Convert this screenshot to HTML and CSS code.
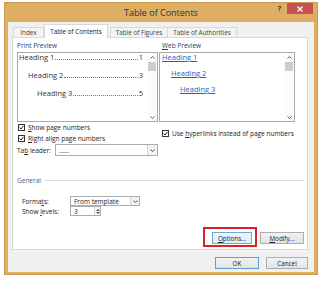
FILE: index.html
```html
<!DOCTYPE html>
<html lang="en">
<head>
    <meta charset="UTF-8">
    <meta name="viewport" content="width=device-width, initial-scale=1.0">
    <title>Table of Contents</title>
    <link rel="stylesheet" href="styles.css">
</head>
<body>
    <div class="screen">
        <div class="dialog">
            <div class="titlebar">
                <span></span>
                <span class="title">Table of Contents</span>
                <div class="title-controls">
                    <span class="help">?</span>
                    <span class="close">
                        <svg width="6" height="6" viewBox="0 0 6 6"><path d="M0.5 0.5 L5.5 5.5 M5.5 0.5 L0.5 5.5" stroke="#fff" stroke-width="1.3"/></svg>
                    </span>
                </div>
            </div>

            <div class="dialog-body">
                <div class="tabs">
                    <span class="tab tab-index">Index</span>
                    <span class="tab tab-toc active">Table of Contents</span>
                    <span class="tab tab-figures">Table of Figures</span>
                    <span class="tab tab-authorities">Table of Authorities</span>
                </div>

                <div class="panel">
                    <div class="previews">
                        <div class="col print-col">
                            <div class="group-label">Print Preview</div>
                            <div class="preview-box">
                                <div class="preview-list">
                                    <div class="toc-line">
                                        <span>Heading 1 </span><span class="dots"></span><span>1</span>
                                    </div>
                                    <div class="toc-line lvl2">
                                        <span>Heading 2 </span><span class="dots"></span><span>3</span>
                                    </div>
                                    <div class="toc-line lvl3">
                                        <span>Heading 3</span><span class="dots"></span><span>5</span>
                                    </div>
                                </div>
                                <div class="scroll">
                                    <span class="arrow"><svg width="5" height="3" viewBox="0 0 5 3"><path d="M0.5 2.5 L2.5 0.5 L4.5 2.5" fill="none" stroke="#555"/></svg></span>
                                    <span class="thumb"></span>
                                    <span class="scroll-fill"></span>
                                    <span class="arrow"><svg width="5" height="3" viewBox="0 0 5 3"><path d="M0.5 0.5 L2.5 2.5 L4.5 0.5" fill="none" stroke="#555"/></svg></span>
                                </div>
                            </div>
                            <div class="check">
                                <span class="box"><svg width="5" height="5" viewBox="0 0 5 5"><path d="M0.5 2.5 L2 4 L4.5 0.8" fill="none" stroke="#222" stroke-width="1"/></svg></span>
                                <span><u>S</u>how page numbers</span>
                            </div>
                            <div class="check">
                                <span class="box"><svg width="5" height="5" viewBox="0 0 5 5"><path d="M0.5 2.5 L2 4 L4.5 0.8" fill="none" stroke="#222" stroke-width="1"/></svg></span>
                                <span><u>R</u>ight align page numbers</span>
                            </div>
                            <div class="field leader">
                                <span class="field-label">Ta<u>b</u> leader:</span>
                                <div class="select select-leader">
                                    <span class="select-value">......</span>
                                    <span class="select-arrow"><svg width="5" height="3" viewBox="0 0 5 3"><path d="M0.5 0.5 L2.5 2.5 L4.5 0.5" fill="none" stroke="#444"/></svg></span>
                                </div>
                            </div>
                        </div>

                        <div class="sep"></div>

                        <div class="col web-col">
                            <div class="group-label"><u>W</u>eb Preview</div>
                            <div class="preview-box">
                                <div class="preview-list links">
                                    <a class="link">Heading 1</a>
                                    <a class="link lvl2">Heading 2</a>
                                    <a class="link lvl3">Heading 3</a>
                                </div>
                                <div class="scroll">
                                    <span class="arrow"><svg width="5" height="3" viewBox="0 0 5 3"><path d="M0.5 2.5 L2.5 0.5 L4.5 2.5" fill="none" stroke="#555"/></svg></span>
                                    <span class="thumb"></span>
                                    <span class="scroll-fill"></span>
                                    <span class="arrow"><svg width="5" height="3" viewBox="0 0 5 3"><path d="M0.5 0.5 L2.5 2.5 L4.5 0.5" fill="none" stroke="#555"/></svg></span>
                                </div>
                            </div>
                            <div class="check">
                                <span class="box"><svg width="5" height="5" viewBox="0 0 5 5"><path d="M0.5 2.5 L2 4 L4.5 0.8" fill="none" stroke="#222" stroke-width="1"/></svg></span>
                                <span>Use <u>h</u>yperlinks instead of page numbers</span>
                            </div>
                        </div>
                    </div>

                    <div class="general">
                        <div class="general-head">
                            <span class="general-label">General</span>
                            <span class="general-line"></span>
                        </div>
                        <div class="field">
                            <span class="form-label">Forma<u>t</u>s:</span>
                            <div class="select select-formats">
                                <span class="select-value">From template</span>
                                <span class="select-arrow"><svg width="5" height="3" viewBox="0 0 5 3"><path d="M0.5 0.5 L2.5 2.5 L4.5 0.5" fill="none" stroke="#444"/></svg></span>
                            </div>
                        </div>
                        <div class="field">
                            <span class="form-label">Show <u>l</u>evels:</span>
                            <div class="select select-levels">
                                <span class="select-value">3</span>
                                <span class="spin">
                                    <svg width="4" height="7" viewBox="0 0 4 7"><path d="M0 3 L2 1 L4 3 Z M0 4 L2 6 L4 4 Z" fill="#555"/></svg>
                                </span>
                            </div>
                        </div>
                    </div>

                    <div class="panel-buttons">
                        <span class="highlight">
                            <span class="btn btn-options"><u>O</u>ptions...</span>
                        </span>
                        <span class="btn btn-modify"><u>M</u>odify...</span>
                    </div>
                </div>

                <div class="footer">
                    <span class="btn btn-ok">OK</span>
                    <span class="btn btn-cancel">Cancel</span>
                </div>
            </div>
        </div>
    </div>
</body>
</html>
```

FILE: styles.css
```css
body {
    margin: 0;
    background-color: #fff;
    font-family: "Open Sans", "Noto Sans", sans-serif;
    font-size: 6.5px;
    color: #222;
}
.screen {
    width: 320px;
    height: 284px;
    padding: 2px 0 0 4px;
    box-sizing: border-box;
    overflow: hidden;
}
.dialog {
    width: 314px;
    height: 273px;
    box-sizing: border-box;
    background-color: #ddae63;
    border: 1px solid #c99a4c;
    padding: 0 3px 2px;
    display: flex;
    flex-direction: column;
}
.titlebar {
    height: 19px;
    display: grid;
    grid-template-columns: 1fr auto 1fr;
    align-items: center;
}
.title {
    font-size: 9px;
    color: #333;
}
.title-controls {
    display: flex;
    justify-content: flex-end;
    align-self: start;
    align-items: center;
}
.help {
    font-size: 7px;
    font-weight: bold;
    color: #333;
    margin-right: 6px;
}
.close {
    width: 26px;
    height: 11px;
    margin-right: 1px;
    background-color: #c75050;
    display: flex;
    align-items: center;
    justify-content: center;
}
.dialog-body {
    flex: 1;
    background-color: #f0f0f0;
    display: flex;
    flex-direction: column;
}
.tabs {
    margin-top: 2px;
    height: 13px;
    padding-left: 5px;
    display: flex;
    align-items: flex-end;
}
.tab {
    height: 10px;
    box-sizing: border-box;
    border: 1px solid #d9d9d9;
    border-bottom: none;
    background-color: #f3f3f3;
    font-size: 6.3px;
    color: #444;
    display: flex;
    align-items: center;
    justify-content: center;
}
.tab.active {
    height: 14px;
    margin-bottom: -1px;
    background-color: #fff;
    color: #222;
    position: relative;
    z-index: 1;
}
.tab-index { width: 31px; }
.tab-toc { width: 64px; }
.tab-figures { width: 58px; margin-left: 2px; }
.tab-authorities { width: 70px; margin-left: -1px; }
.panel {
    height: 213px;
    box-sizing: border-box;
    margin: 0 6px 0 4px;
    padding: 3px 3px 2px 4px;
    background-color: #fff;
    border: 1px solid #d9d9d9;
    display: flex;
    flex-direction: column;
}
.previews {
    display: grid;
    grid-template-columns: 141px 1px 136px;
}
.print-col {
    padding-bottom: 14px;
}
.sep {
    margin: -1px 3px 0 5px;
    background-color: #d9d9d9;
}
.group-label {
    height: 10px;
    line-height: 10px;
    margin-bottom: 1px;
    color: #1d3c64;
}
.web-col .group-label {
    padding-left: 3px;
}
.preview-box {
    height: 70px;
    box-sizing: border-box;
    border: 1px solid #a9a9a9;
    display: flex;
}
.preview-list {
    flex: 1;
    padding: 0 4px 0 1px;
    font-size: 7.5px;
    color: #333;
}
.toc-line {
    height: 9px;
    line-height: 9px;
    margin-bottom: 9px;
    display: flex;
    align-items: baseline;
}
.toc-line.lvl2 { padding-left: 9px; }
.toc-line.lvl3 { padding-left: 18px; }
.dots {
    flex: 1;
    border-bottom: 1px dotted #777;
    margin: 0 1px;
}
.links {
    padding-left: 2px;
    display: flex;
    flex-direction: column;
    align-items: flex-start;
}
.link {
    height: 9px;
    line-height: 9px;
    margin-bottom: 7px;
    color: #1a63c5;
    text-decoration: underline;
}
.link.lvl2 { margin-left: 9px; }
.link.lvl3 { margin-left: 18px; }
.scroll {
    width: 10px;
    background-color: #fbfbfb;
    display: flex;
    flex-direction: column;
}
.arrow {
    height: 8px;
    display: flex;
    align-items: center;
    justify-content: center;
}
.thumb {
    height: 9px;
    margin: 1px 1px 0;
    background-color: #cdcdcd;
}
.scroll-fill {
    flex: 1;
}
.check {
    height: 11px;
    padding-left: 1px;
    white-space: nowrap;
    display: flex;
    align-items: center;
    gap: 3px;
}
.print-col .check:first-of-type {
    margin-top: 6px;
}
.web-col .check {
    margin-top: 6px;
    padding-left: 3px;
}
.box {
    width: 7px;
    height: 7px;
    flex-shrink: 0;
    box-sizing: border-box;
    border: 1px solid #333;
    background-color: #fff;
    display: flex;
    align-items: center;
    justify-content: center;
}
.field {
    display: flex;
    align-items: center;
}
.leader {
    height: 12px;
}
.field-label {
    width: 38px;
}
.select {
    height: 100%;
    box-sizing: border-box;
    border: 1px solid #acacac;
    background-color: #fff;
    display: flex;
    align-items: center;
}
.select-leader { width: 103px; }
.select-value {
    flex: 1;
    padding-left: 3px;
}
.select-arrow {
    width: 10px;
    height: 100%;
    box-sizing: border-box;
    border-left: 1px solid #d4d4d4;
    background-color: #f4f4f4;
    display: flex;
    align-items: center;
    justify-content: center;
}
.general {
    margin-top: 5px;
}
.general-head {
    height: 10px;
    display: flex;
    align-items: center;
    gap: 3px;
}
.general-label {
    color: #4a6380;
}
.general-line {
    flex: 1;
    height: 1px;
    background-color: #dcdcdc;
}
.general .field {
    height: 10px;
    padding-left: 5px;
}
.general-head + .field {
    margin-top: 11px;
}
.form-label {
    width: 48px;
}
.select-formats { width: 70px; }
.select-levels { width: 31px; }
.select-formats .select-arrow { width: 9px; }
.spin {
    width: 6px;
    height: 100%;
    box-sizing: border-box;
    border-left: 1px solid #d4d4d4;
    background-color: #f4f4f4;
    display: flex;
    align-items: center;
    justify-content: center;
}
.panel-buttons {
    margin-top: auto;
    display: flex;
    justify-content: flex-end;
    align-items: flex-end;
    gap: 3px;
}
.highlight {
    border: 2px solid #e01e26;
    padding: 3px 3px 1px 7px;
    display: flex;
}
.btn {
    height: 12px;
    box-sizing: border-box;
    border: 1px solid #adadad;
    background: linear-gradient(#f2f2f2, #e3e3e3);
    font-size: 6.3px;
    color: #222;
    display: flex;
    align-items: center;
    justify-content: center;
}
.btn-options {
    width: 40px;
    border-color: #6ea9de;
    background: linear-gradient(#eef6fd, #dcecfc);
}
.btn-modify {
    width: 44px;
    margin-bottom: 3px;
}
.footer {
    flex: 1;
    padding: 7px 6px 0 0;
    display: flex;
    justify-content: flex-end;
    align-items: flex-start;
    gap: 7px;
}
.btn-ok {
    width: 44px;
    border-color: #5c9ddd;
}
.btn-cancel {
    width: 42px;
}
```
